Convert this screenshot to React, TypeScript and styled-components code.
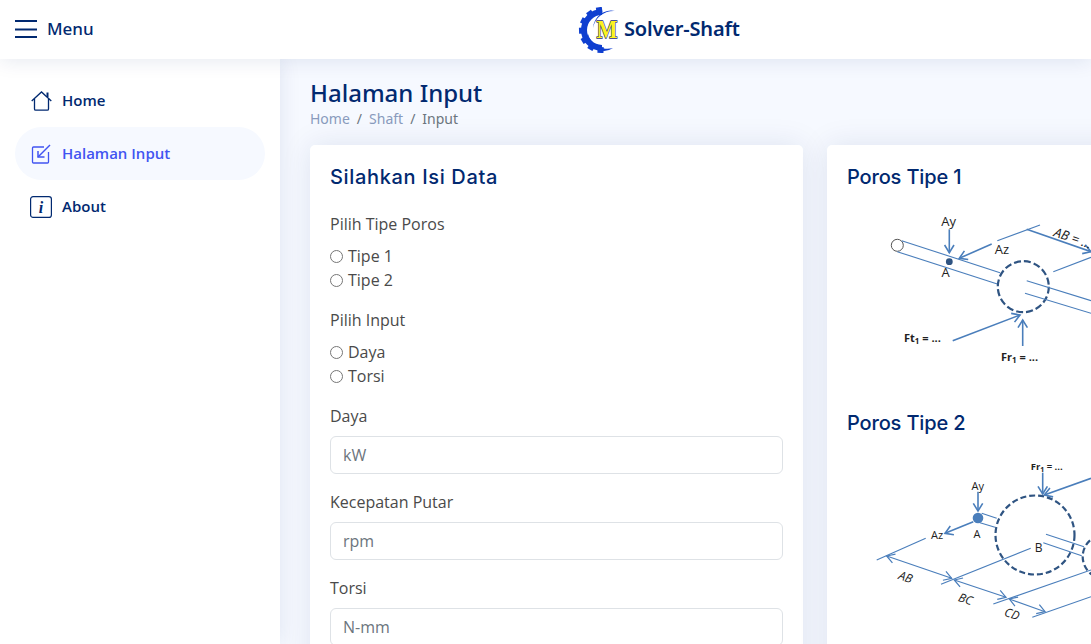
import React from "react";
import styled, { createGlobalStyle } from "styled-components";

const Global = createGlobalStyle`
  html, body { margin: 0; padding: 0; height: 644px; overflow: hidden; background: #f6f9ff; }
  * { box-sizing: border-box; }
  body { font-family: "Open Sans", "Noto Sans", sans-serif; color: #444; }
`;

const Page = styled.div`
  display: flex;
  flex-direction: column;
  height: 644px;
  overflow: hidden;
`;
const Header = styled.header`
  position: relative;
  z-index: 3;
  flex: none;
  height: 59px;
  background: #fff;
  box-shadow: 0 2px 20px rgba(1, 41, 112, 0.1);
  display: grid;
  grid-template-columns: 562px auto;
  align-items: center;
  padding: 0 15px;
`;
const MenuToggle = styled.div`
  display: flex;
  align-items: center;
  gap: 10px;
  font-family: "Noto Sans", sans-serif;
  font-size: 17px;
  font-weight: 500;
  color: #012970;
  padding-bottom: 2px;
`;
const LogoWrap = styled.div`
  display: flex;
  align-items: center;
  gap: 3px;
`;
const LogoText = styled.span`
  font-family: "Noto Sans", sans-serif;
  font-size: 20px;
  font-weight: 600;
  letter-spacing: -0.17px;
  color: #012970;
  padding-bottom: 2px;
`;
const Body = styled.div`
  display: flex;
  flex: 1;
  min-height: 0;
`;
const Sidebar = styled.aside`
  position: relative;
  z-index: 2;
  flex: none;
  width: 280px;
  background: #fff;
  box-shadow: 0 0 20px rgba(1, 41, 112, 0.1);
  padding: 15px 15px;
  display: flex;
  flex-direction: column;
`;
const NavItem = styled.a<{ $active?: boolean }>`
  display: flex;
  align-items: center;
  gap: 10px;
  height: 53px;
  padding-left: 15px;
  border-radius: 27px;
  font-size: 15px;
  font-weight: 600;
  color: ${(p) => (p.$active ? "#4154f1" : "#012970")};
  background: ${(p) => (p.$active ? "#f6f9ff" : "transparent")};
`;
const NavIcon = styled.span`
  display: flex;
  align-items: center;
  justify-content: center;
  width: 22px;
  height: 22px;
  margin-top: 1px;
`;
const NavText = styled.span`
  margin-top: -2px;
`;
const Main = styled.main`
  flex: 1;
  min-width: 0;
  overflow: hidden;
  padding: 19px 0 0 30px;
`;
const PageTitle = styled.h1`
  margin: 0;
  font-family: "Noto Sans", sans-serif;
  font-size: 24px;
  line-height: 29px;
  font-weight: 500;
  color: #012970;
`;
const Crumbs = styled.nav`
  display: flex;
  gap: 7px;
  margin-top: 1px;
  margin-bottom: 16px;
  font-family: "Noto Sans", sans-serif;
  font-size: 14px;
  line-height: 21px;
  color: #6c757d;
`;
const Crumb = styled.span<{ $link?: boolean }>`
  color: ${(p) => (p.$link ? "#899bbd" : "#6c757d")};
`;
const Columns = styled.div`
  display: grid;
  grid-template-columns: 493px 493px;
  gap: 24px;
`;
const Card = styled.section`
  background: #fff;
  border-radius: 5px;
  box-shadow: 0 0 30px rgba(1, 41, 112, 0.1);
  padding: 20px 20px 30px;
`;
const CardTitle = styled.h2<{ $spread?: boolean; $tight?: boolean }>`
  margin: 0 0 ${(p) => (p.$tight ? "16px" : "23px")};
  font-family: "Inter", sans-serif;
  font-size: 20px;
  line-height: 24px;
  font-weight: 500;
  letter-spacing: ${(p) => (p.$spread ? "0.65px" : "-0.15px")};
  color: #012970;
`;
const Group = styled.div`
  margin-bottom: 16px;
`;
const Label = styled.div`
  font-size: 16px;
  line-height: 24px;
  margin-bottom: 8px;
  color: #4a4a4a;
`;
const RadioRow = styled.label`
  display: flex;
  align-items: center;
  height: 24px;
  font-size: 16px;
  color: #4a4a4a;
`;
const Radio = styled.input`
  margin: 0 5px 0 0;
  width: 13px;
  height: 13px;
`;
const TextInput = styled.input`
  display: block;
  width: 100%;
  height: 38px;
  padding: 6px 12px;
  border: 1px solid #dee2e6;
  border-radius: 6px;
  font-family: inherit;
  font-size: 16px;
  background: #fff;
  &::placeholder { color: #6c757d; opacity: 1; }
`;
const Diagram = styled.svg`
  display: block;
  overflow: hidden;
`;
const DiagramSpacer = styled.div`
  height: 36px;
`;

const GEAR = "#0f3fd0";
const Logo = () => (
  <svg width="44" height="46" viewBox="0 0 44 46" aria-hidden="true">
    <path d="M25 5 A18 18 0 0 0 25 41" fill="none" stroke={GEAR} strokeWidth="6" />
    {[-8, -36, -64, -92, -120, -148, -176].map((a) => (
      <rect key={a} x="22" y="0" width="6" height="6" fill={GEAR} transform={`rotate(${a} 25 23)`} />
    ))}
    <path d="M38 4 A21 21 0 0 0 16 21 A18 19 0 0 1 38 4 Z" fill={GEAR} />
    <path d="M11 27 A16 16 0 0 0 36 41 A20 20 0 0 1 11 27 Z" fill={GEAR} />
    <text
      x="19.5"
      y="31"
      textLength="21"
      lengthAdjust="spacingAndGlyphs"
      fontFamily="'Liberation Serif', serif"
      fontWeight="700"
      fontSize="26"
      fill="#fbf21f"
      stroke="#1b2a80"
      strokeWidth="1.3"
      paintOrder="stroke"
    >
      M
    </text>
  </svg>
);

const Hamburger = () => (
  <svg width="22" height="18" viewBox="0 0 22 18" aria-hidden="true">
    <path d="M0 1h22M0 9.5h22M0 17h22" stroke="#012970" strokeWidth="2" />
  </svg>
);
const HomeIcon = () => (
  <svg width="21" height="20" viewBox="0 0 21 20" fill="none" stroke="#012970" strokeWidth="1.3" aria-hidden="true">
    <path d="M0.7 10 L10.5 1 L20.3 10" />
    <path d="M3.5 8 V18 a1.2 1.2 0 0 0 1.2 1.2 H16.3 a1.2 1.2 0 0 0 1.2-1.2 V8" />
    <path d="M16.5 1.5 V6" strokeWidth="2" />
  </svg>
);
const InputIcon = () => (
  <svg width="20" height="20" viewBox="0 0 20 20" fill="none" stroke="#4154f1" strokeWidth="1.3" aria-hidden="true">
    <path d="M13 3 H2.5 a1 1 0 0 0-1 1 V18 a1 1 0 0 0 1 1 H16.5 a1 1 0 0 0 1-1 V8" />
    <path d="M19 1 L7 13" strokeWidth="1.5" />
    <path d="M7 7 V13 H13.5" strokeWidth="1.5" />
  </svg>
);
const InfoIcon = () => (
  <svg width="22" height="22" viewBox="0 0 22 22" fill="none" aria-hidden="true">
    <rect x="0.6" y="0.6" width="20.8" height="20.8" rx="2.5" stroke="#012970" strokeWidth="1.2" />
    <text x="11" y="17" textAnchor="middle" fontFamily="'Liberation Serif', serif" fontStyle="italic" fontSize="16" fill="#012970">i</text>
  </svg>
);

const BLUE = "#4a7ebb";
const DARK = "#2f5482";
const Arrow = ({ x1, y1, x2, y2, both = false, w = 1.6 }: { x1: number; y1: number; x2: number; y2: number; both?: boolean; w?: number }) => {
  const a = Math.atan2(y2 - y1, x2 - x1);
  const s = 9;
  const head = (x: number, y: number, ang: number) =>
    `M${x + s * Math.cos(ang + 0.55)} ${y + s * Math.sin(ang + 0.55)} L${x} ${y} L${x + s * Math.cos(ang - 0.55)} ${y + s * Math.sin(ang - 0.55)}`;
  return (
    <g fill="none" stroke={BLUE} strokeWidth={w}>
      <path d={`M${x1} ${y1}L${x2} ${y2}`} />
      <path d={head(x2, y2, a + Math.PI)} />
      {both && <path d={head(x1, y1, a)} />}
    </g>
  );
};
const Line = ({ p }: { p: number[] }) => (
  <path d={`M${p[0]} ${p[1]}L${p[2]} ${p[3]}`} stroke={BLUE} strokeWidth="1.1" fill="none" />
);
const T = ({ x, y, s, anchor = "middle", bold, italic, rot, children }: { x: number; y: number; s: number; anchor?: string; bold?: boolean; italic?: boolean; rot?: number; children: React.ReactNode }) => (
  <text
    x={x}
    y={y}
    fontFamily="'Open Sans', sans-serif"
    fontSize={s}
    fontWeight={bold ? 700 : 400}
    fontStyle={italic ? "italic" : "normal"}
    fill="#222"
    textAnchor={anchor}
    transform={rot ? `rotate(${rot} ${x} ${y})` : undefined}
  >
    {children}
  </text>
);

const DiagramOne = () => (
  <Diagram width="244" height="170" viewBox="847 205 244 170">
    <circle cx="897.3" cy="245.3" r="6" fill="none" stroke="#555" strokeWidth="1" />
    <Line p={[901.7, 240.7, 1000, 272.7]} />
    <Line p={[897.3, 251.7, 997.3, 284]} />
    <T x={948.7} y={226} s={13}>Ay</T>
    <Arrow x1={949.3} y1={229.3} x2={949.3} y2={252.7} />
    <circle cx="949.3" cy="261.7" r="3.4" fill={DARK} />
    <T x={945.7} y={277} s={13}>A</T>
    <Arrow x1={991.7} y1={244} x2={959.3} y2={258.3} />
    <T x={1002} y={254} s={13}>Az</T>
    <Line p={[997.3, 240.7, 1040, 225]} />
    <Arrow x1={1026.7} y1={229.3} x2={1091} y2={251.7} />
    <T x={1053} y={236} s={13} anchor="start" italic rot={19}>AB = ...</T>
    <circle cx="1023.3" cy="286.7" r="25.5" fill="none" stroke={DARK} strokeWidth="2.2" strokeDasharray="7 3" />
    <Line p={[1026.7, 280.7, 1091, 300.7]} />
    <Line p={[1025, 293.3, 1091, 313.3]} />
    <Line p={[1053.3, 271.7, 1091, 257.3]} />
    <Arrow x1={952.7} y1={340.7} x2={1020} y2={315} />
    <Arrow x1={1022.7} y1={346} x2={1022.7} y2={320} />
    <T x={904} y={342} s={11} anchor="start" bold>Ft<tspan fontSize="8" dy="2">1</tspan><tspan dy="-2"> = ...</tspan></T>
    <T x={1001} y={361} s={11} anchor="start" bold>Fr<tspan fontSize="8" dy="2">1</tspan><tspan dy="-2"> = ...</tspan></T>
  </Diagram>
);

const DiagramTwo = () => (
  <Diagram width="244" height="193" viewBox="847 451 244 193">
    <T x={1030.7} y={470} s={9.5} anchor="start" bold>Fr<tspan fontSize="7" dy="2">1</tspan><tspan dy="-2"> = ...</tspan></T>
    <Arrow x1={1042.7} y1={472.7} x2={1042.7} y2={494} />
    <Arrow x1={1091} y1={478.3} x2={1044.3} y2={495} />
    <T x={977.7} y={490} s={11}>Ay</T>
    <Arrow x1={978} y1={491.7} x2={978} y2={511} />
    <circle cx="978" cy="518" r="5.3" fill={BLUE} />
    <Line p={[981.7, 513.3, 996.7, 518.3]} />
    <Line p={[980, 522.7, 995, 527.3]} />
    <T x={977} y={538} s={11}>A</T>
    <Arrow x1={973.3} y1={521.7} x2={945} y2={533.3} />
    <T x={937} y={539} s={11}>Az</T>
    <Line p={[925.7, 538.3, 876.7, 560]} />
    <circle cx="1035" cy="535" r="39.5" fill="none" stroke={DARK} strokeWidth="2.2" strokeDasharray="6 3" />
    <circle cx="1104.7" cy="556.7" r="22" fill="none" stroke={DARK} strokeWidth="2.2" strokeDasharray="6 3" />
    <T x={1038.7} y={552} s={12}>B</T>
    <Line p={[1030.7, 548.3, 941, 584.3]} />
    <Line p={[1046, 534.3, 1084, 546.7]} />
    <Line p={[1043.3, 542.7, 1081.7, 555.7]} />
    <Arrow x1={886.7} y1={556} x2={951.7} y2={578.3} both w={1.2} />
    <Arrow x1={954.3} y1={580} x2={1006} y2={597.3} both w={1.2} />
    <Arrow x1={1009.3} y1={599} x2={1045} y2={611.7} both w={1.2} />
    <Line p={[993.3, 604, 1091, 570]} />
    <Line p={[1032.3, 617.3, 1091, 596.7]} />
    <T x={904.3} y={581} s={12} italic rot={19}>AB</T>
    <T x={964.3} y={603} s={12} italic rot={19}>BC</T>
    <T x={1010.7} y={618} s={12} italic rot={19}>CD</T>
  </Diagram>
);

export default function App() {
  return (
    <Page>
      <Global />
      <Header>
        <MenuToggle>
          <Hamburger />
          Menu
        </MenuToggle>
        <LogoWrap>
          <Logo />
          <LogoText>Solver-Shaft</LogoText>
        </LogoWrap>
      </Header>
      <Body>
        <Sidebar>
          <NavItem><NavIcon><HomeIcon /></NavIcon><NavText>Home</NavText></NavItem>
          <NavItem $active><NavIcon><InputIcon /></NavIcon><NavText>Halaman Input</NavText></NavItem>
          <NavItem><NavIcon><InfoIcon /></NavIcon><NavText>About</NavText></NavItem>
        </Sidebar>
        <Main>
          <PageTitle>Halaman Input</PageTitle>
          <Crumbs>
            <Crumb $link>Home</Crumb><span>/</span>
            <Crumb $link>Shaft</Crumb><span>/</span>
            <Crumb>Input</Crumb>
          </Crumbs>
          <Columns>
            <Card>
              <CardTitle $spread>Silahkan Isi Data</CardTitle>
              <Group>
                <Label>Pilih Tipe Poros</Label>
                <RadioRow><Radio type="radio" name="tipe" />Tipe 1</RadioRow>
                <RadioRow><Radio type="radio" name="tipe" />Tipe 2</RadioRow>
              </Group>
              <Group>
                <Label>Pilih Input</Label>
                <RadioRow><Radio type="radio" name="input" />Daya</RadioRow>
                <RadioRow><Radio type="radio" name="input" />Torsi</RadioRow>
              </Group>
              <Group>
                <Label>Daya</Label>
                <TextInput placeholder="kW" />
              </Group>
              <Group>
                <Label>Kecepatan Putar</Label>
                <TextInput placeholder="rpm" />
              </Group>
              <Group>
                <Label>Torsi</Label>
                <TextInput placeholder="N-mm" />
              </Group>
            </Card>
            <Card>
              <CardTitle $tight>Poros Tipe 1</CardTitle>
              <DiagramOne />
              <DiagramSpacer />
              <CardTitle $tight>Poros Tipe 2</CardTitle>
              <DiagramTwo />
            </Card>
          </Columns>
        </Main>
      </Body>
    </Page>
  );
}
